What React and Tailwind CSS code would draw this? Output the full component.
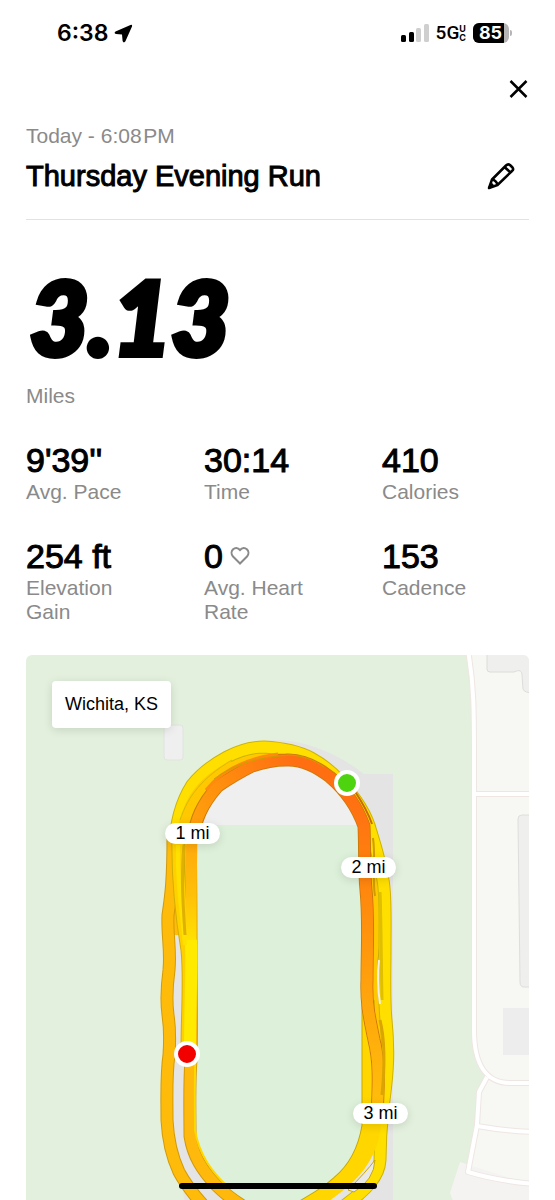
import React from "react";

const stats = [
  { id: "pace", value: "9'39''", label: "Avg. Pace" },
  { id: "time", value: "30:14", label: "Time" },
  { id: "calories", value: "410", label: "Calories" },
  { id: "elevation", value: "254 ft", label: "Elevation Gain" },
  { id: "heart", value: "0", label: "Avg. Heart Rate", icon: <HeartIcon /> },
  { id: "cadence", value: "153", label: "Cadence" }
];

// bottom to top, every lap is drawn as a dark casing with a lighter core
const laps = [
  { id: "middle", color: "#ffc800", edge: "#cfa300", d: "M182 850 C184 825 192 803 209 783 C228 766 252 756 280 756 C304 757 322 768 338 782 C352 795 364 812 370 832 C374 850 372 880 375 900 C377 915 376 930 373 950 C370 975 372 1000 379 1020 C384 1040 383 1060 380 1080 L378 1110" },
  { id: "outer", color: "#ffdf00", edge: "#cdb400", d: "M175 850 C175 826 180 804 192 785 C200 775 212 765 227 757 C240 750 250 747 264 747 C282 748 298 751 311 758 C322 764 332 772 340 781 C354 796 366 812 371 832 C376 848 380 860 383 880 C386 895 385 920 385 950 C385 975 384 1000 386 1020 C389 1050 388 1070 384 1100 C382 1120 380 1130 380 1160 C379 1177 366 1190 344 1206" },
  { id: "leftMiddle", color: "#ffbb0a", edge: "#d19a08", d: "M177 835 C177 860 176 890 173 915 L173 935" },
  { id: "left", color: "#ffbb0a", edge: "#d19a08", d: "M173 835 C173 880 171 895 168 915 C167 935 171 950 169 970 C167 985 166 1000 168 1015 C170 1028 170 1040 169 1055 C166 1075 167 1095 167 1120 C168 1140 171 1155 179 1172 C186 1185 194 1195 204 1206" },
  { id: "leftInner", color: "#ffb80c", edge: "#d09a08", d: "M190 835 C191 880 191 920 191 950 C191 1000 192 1020 191 1060 C189 1085 190 1110 190 1136 C193 1156 202 1170 216 1185 C226 1195 236 1202 246 1208" },
  { id: "final", color: "#ffd000", edge: "#d3ae00", d: "M178 835 C177 880 182 920 187 950 C190 980 187 1010 187 1050" },
  { id: "rightInner", color: "#ffd600", edge: "#c9a800", d: "M368 1000 L368 1126 C364 1150 355 1168 338 1182 C328 1191 320 1196 296 1210" },
  { id: "rightOuter", color: "#ffd600", edge: "#ffd600", d: "M375 1090 L374 1130 C370 1152 360 1168 343 1182 C332 1192 322 1198 302 1210" },
  { id: "hot", color: "url(#pace)", edge: "#cc7a08", d: "M193 840 C195 820 202 804 218 786 C230 778 240 772 252 766 C264 762 274 760 286 760 C302 759 316 766 330 777 C350 794 359 812 364 826 C365 845 364 870 366 890 C369 920 367 950 367 980 C366 1005 370 1020 374 1040 C379 1060 379 1080 377 1114" }
];

const mileMarkers = [
  { id: 1, label: "1 mi", place: "left-[139px] top-[168px]" },
  { id: 2, label: "2 mi", place: "left-[315px] top-[202px]" },
  { id: 3, label: "3 mi", place: "left-[327px] top-[448px]" }
];

export default function App() {
  return (
    <div className="relative w-full h-screen overflow-hidden bg-white text-black font-['Liberation_Sans',Arial,sans-serif]">
      <StatusBar />
      <main className="flex flex-col px-[26px]">
        <div className="flex items-center justify-end h-[46px]">
          <button type="button" aria-label="Close" className="flex">
            <CloseIcon />
          </button>
        </div>
        <header className="flex flex-col gap-3 pt-3 pb-[27px] border-b border-[#e2e2e2]">
          <p className="text-[21px] leading-6 text-[#8a8a8a]">Today - 6:08{"\u200A"}PM</p>
          <div className="flex items-center justify-between pr-[14px]">
            <h1 className="text-[29px] leading-8 font-normal [-webkit-text-stroke:1px_black]">Thursday Evening Run</h1>
            <button type="button" aria-label="Edit run name" className="flex">
              <PencilIcon />
            </button>
          </div>
        </header>
        <section className="flex flex-col gap-4 pt-11">
          <p className="pl-1 text-[101px] leading-[104px] font-black italic font-['Lato',sans-serif] [-webkit-text-stroke:6px_black]">3.13</p>
          <p className="text-[21px] leading-6 text-[#8a8a8a]">Miles</p>
        </section>
        <dl className="grid grid-cols-3 gap-x-[31px] gap-y-[34px] pt-[34px]">
          {stats.map((stat) => (
            <Stat key={stat.id} {...stat} />
          ))}
        </dl>
        <RunMap />
      </main>
      <div className="absolute bottom-[11px] inset-x-0 flex justify-center">
        <div className="w-[198px] h-[6px] rounded-full bg-black" />
      </div>
    </div>
  );
}

function StatusBar() {
  return (
    <div className="flex items-center justify-between h-[66px] pl-[57px] pr-[43px] font-['Inter',sans-serif]">
      <div className="flex items-center gap-[6px]">
        <span className="text-[23px] leading-7 font-semibold">6:38</span>
        <svg width="19" height="19" viewBox="0 0 19 19">
          <path d="M16.500 1 L1.500 7.500 Q-0.500 9 2 10 L8 10.600 L8.600 17 Q9.600 19.500 11.300 17.600 L18 2.500 Q18.600 0.300 16.500 1 Z" fill="#000" />
        </svg>
      </div>
      <div className="flex items-center gap-[7px]">
        <svg width="28" height="18" viewBox="0 0 28 18">
          <rect x="0" y="11" width="5" height="7" rx="1.500" />
          <rect x="8" y="8" width="5" height="10" rx="1.500" />
          <rect x="15" y="4" width="5" height="14" rx="1.500" fill="#cfcfcf" />
          <rect x="23" y="0" width="5" height="18" rx="1.500" fill="#cfcfcf" />
        </svg>
        <div className="flex items-center">
          <span className="text-[19px] leading-6 font-medium font-['Roboto',sans-serif]">5G</span>
          <span className="flex flex-col text-[9px] leading-[9px] font-bold">
            <span>U</span>
            <span>C</span>
          </span>
        </div>
        <div className="flex items-center gap-px">
          <div className="flex items-center w-[36px] h-[20px] rounded-[6px] overflow-hidden bg-[#b5b5b5]">
            <span className="w-[31px] h-full pl-1 bg-black text-white text-center text-[18px] leading-5 font-bold">85</span>
          </div>
          <div className="w-[2px] h-[6px] rounded-r-full bg-[#b5b5b5]" />
        </div>
      </div>
    </div>
  );
}

function Stat({ value, label, icon }) {
  return (
    <div className="flex flex-col gap-[2px]">
      <dd className="order-first flex items-center gap-[7px] text-[34px] leading-9 [-webkit-text-stroke:1px_black]">
        {value}
        {icon}
      </dd>
      <dt className="pr-6 text-[21px] leading-6 text-[#8a8a8a]">{label}</dt>
    </div>
  );
}

function RunMap() {
  return (
    <section className="relative mt-[31px] h-[640px] rounded-t-[6px] overflow-hidden bg-[#e3f0dd]">
      <svg className="block w-full h-full" viewBox="26 655 503 640" preserveAspectRatio="xMinYMin slice">
        <defs>
          <linearGradient id="pace" gradientUnits="userSpaceOnUse" x1="190" y1="850" x2="300" y2="770">
            <stop offset="0" stopColor="#ffa80c" />
            <stop offset="0.4" stopColor="#ff920d" />
            <stop offset="1" stopColor="#ff6f12" />
          </linearGradient>
          <linearGradient id="paceLeft" gradientUnits="userSpaceOnUse" x1="0" y1="840" x2="0" y2="950">
            <stop offset="0" stopColor="#ffa80c" />
            <stop offset="0.5" stopColor="#ffc008" />
            <stop offset="1" stopColor="#ffe800" />
          </linearGradient>
          <linearGradient id="paceRight" gradientUnits="userSpaceOnUse" x1="0" y1="800" x2="0" y2="1110">
            <stop offset="0" stopColor="#ff7012" />
            <stop offset="0.35" stopColor="#ff8c0d" />
            <stop offset="0.65" stopColor="#ffa60c" />
            <stop offset="1" stopColor="#ffbf0a" />
          </linearGradient>
        </defs>

        {/* land, blocks and buildings */}
        <path d="M467 655 C473 685 474 710 474 760 L474 1030 C474 1055 478 1068 488 1077 L479 1094 L478 1125 L468 1172 L462 1200 V1300 H529 V655 Z" fill="#f7f8f3" />
        <path d="M460 1162 L529 1184 V1300 H490 L450 1193 Z" fill="#f4f3f2" />
        <path d="M487 650 V669 Q487 672 490 672 H514 Q522 668 522 675 L523 689 Q524 693 535 693 V650 Z" fill="#efefed" stroke="#dcdcda" />
        <path d="M535 815 H522 Q518 815 518 819 L520 982 Q520 987 524 987 H535 Z" fill="#efefed" stroke="#dededc" />
        <rect x="503" y="1008" width="26" height="47" fill="#ededee" />
        <rect x="164" y="725" width="19" height="35" rx="3" fill="#efefef" stroke="#e0e4de" />

        {/* roads */}
        {[{ color: "#eee6e3", width: 6 }, { color: "#ffffff", width: 4 }].map((road) => (
          <g key={road.color} fill="none" stroke={road.color} strokeWidth={road.width} strokeLinejoin="round">
            <path d="M468 650 C474 685 474 710 474 760 V1030 C474 1064 486 1083 510 1083 H535" />
            <path d="M474 794 H535" />
            <path d="M487 1077 L479 1092 Q478 1110 477 1125 L468 1172 Q498 1181 535 1184" />
            <path d="M477 1126 Q505 1131 535 1132" />
          </g>
        ))}

        {/* running track around the field */}
        <path d="M172 1120 V840 C180 780 225 740 280 740 C310 742 340 755 364 774 H393 V1300 H200 Z" fill="#e4e4e5" />
        <path d="M196 825 C205 790 240 764 285 764 C325 768 352 795 362 825 Z" fill="#efefef" />
        <path d="M192 825 H366 V1120 C366 1170 330 1206 280 1206 C225 1206 192 1165 192 1120 Z" fill="#ddf0d9" />

        {/* route */}
        <g fill="none" strokeLinejoin="round">
          {laps.map((lap) => (
            <g key={lap.id}>
              <path d={lap.d} stroke={lap.edge} strokeWidth="13" />
              <path d={lap.d} stroke={lap.color} strokeWidth="11" />
            </g>
          ))}
          <path d="M330 777 C350 794 359 812 364 826 C365 845 364 870 366 890 C369 920 367 950 367 980 C366 1005 370 1020 374 1040 C379 1060 379 1080 377 1114" stroke="url(#paceRight)" strokeWidth="11" />
          <path d="M192 838 C191 880 191 920 191 950" stroke="url(#paceLeft)" strokeWidth="11" />
          <path d="M191 940 C192 975 190 1010 190 1048" stroke="#ffea00" strokeWidth="12" />
          <path d="M178 845 C177 880 181 905 185 945" stroke="#ffe000" strokeWidth="4" />
          <path d="M184 845 C181 875 183 905 185 935" stroke="#deb000" strokeWidth="3" />
          <path d="M196 1045 C194 1080 195 1100 195 1130 C199 1155 212 1172 228 1187" stroke="#ffd800" strokeWidth="2" />
          <path d="M182 824 C188 798 200 780 232 763" stroke="#ffc800" strokeWidth="6" />
          <path d="M180 820 C188 796 202 778 232 760" stroke="#d8ba00" strokeWidth="1" />
          <path d="M206 790 C222 770 248 758 278 754" stroke="#ff8a0d" strokeWidth="3" />
          <path d="M214 779 C236 763 260 757 290 755 C304 756 314 760 324 767" stroke="#c9a000" strokeWidth="1" />
          <path d="M354 790 C362 802 368 812 372 824" stroke="#c96a08" strokeWidth="2" />
          <path d="M373 838 C376 860 372 880 375 896" stroke="#d09a00" strokeWidth="2" />
          <path d="M380 892 C381 910 381 950 382 1000" stroke="#e0be00" strokeWidth="3" />
          <path d="M379 960 C377 975 378 990 380 1004" stroke="#f0efe6" strokeWidth="2" />
          <path d="M380 1020 C385 1040 385 1065 382 1095" stroke="#dba400" strokeWidth="3" />
          <path d="M375 1160 Q366 1172 348 1190 L354 1192 Q374 1180 375 1160 Z" fill="#e9e9e9" stroke="#c9a800" strokeWidth="1" />
        </g>

        <g stroke="#fff" strokeWidth="4">
          <circle cx="347" cy="783" r="11" fill="#4ed30f" />
          <circle cx="187" cy="1054" r="11" fill="#f20000" />
        </g>
      </svg>

      <span className="absolute left-[26px] top-[26px] px-[13px] rounded-[4px] bg-white text-[18px] leading-[47px] shadow-[0_2px_10px_rgba(0,0,0,0.12)]">
        Wichita, KS
      </span>
      {mileMarkers.map((marker) => (
        <span
          key={marker.id}
          className={`absolute w-[55px] rounded-full bg-white text-center text-[18px] leading-[21px] shadow-[0_2px_10px_rgba(0,0,0,0.12)] ${marker.place}`}
        >
          {marker.label}
        </span>
      ))}
    </section>
  );
}

function CloseIcon() {
  return (
    <svg width="20" height="20" viewBox="0 0 20 20" fill="none" stroke="#000" strokeWidth="2.5">
      <path d="M1.500 2 L17.500 18 M17.500 2 L1.500 18" />
    </svg>
  );
}

function PencilIcon() {
  return (
    <svg width="28" height="28" viewBox="0 0 28 28" fill="none" stroke="#000" strokeWidth="2.500" strokeLinejoin="round">
      <path d="M2 26 L5 17.500 L19 3.500 Q21 1.500 23 3 L25.500 5.500 Q27 7.500 25 9 L10.500 23 Z" />
      <path d="M17.500 5 L23.500 10.500 M5 17.500 Q9.500 18.500 10.500 23 M2 26 L6 22" />
    </svg>
  );
}

function HeartIcon() {
  return (
    <svg width="20" height="20" viewBox="0 0 20 20" fill="none" stroke="#8a8a8a" strokeWidth="2">
      <path d="M10 17.500 L3 10.500 C-1.500 5.500 5.500 -1.500 10 4 C14.500 -1.500 21.500 5.500 17 10.500 Z" />
    </svg>
  );
}
